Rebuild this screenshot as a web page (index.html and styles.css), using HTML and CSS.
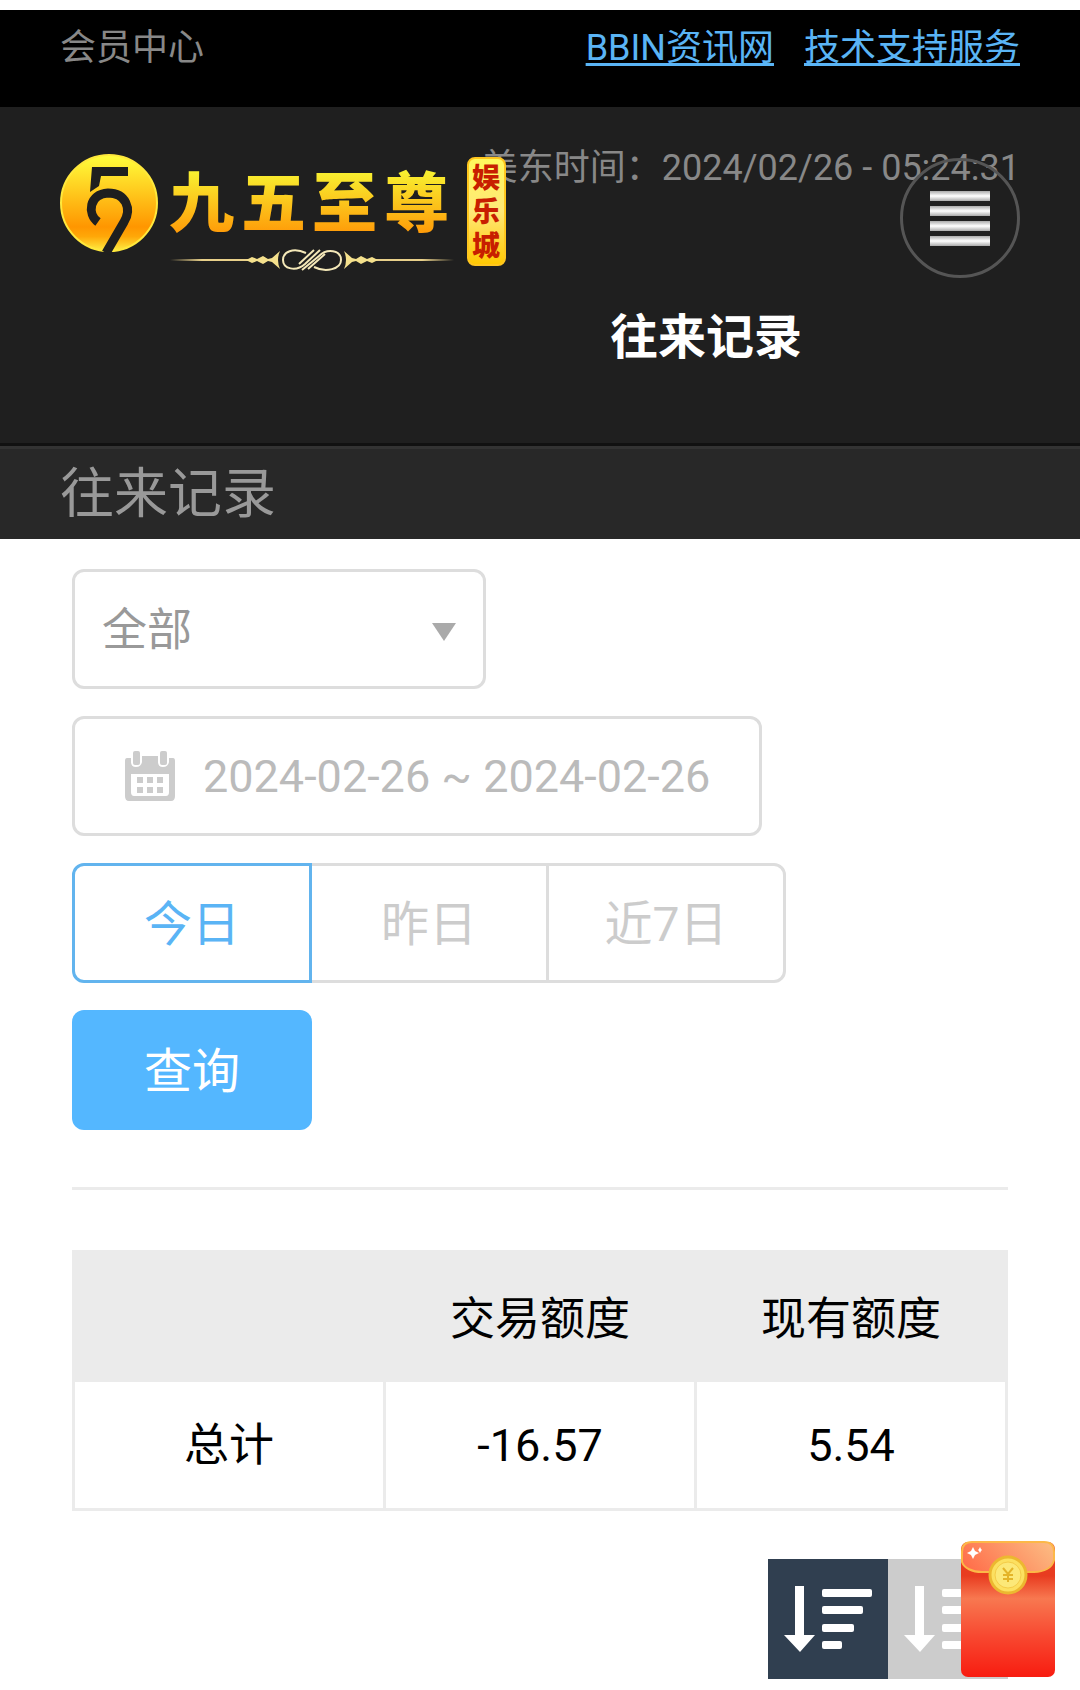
FILE: index.html
```html
<!DOCTYPE html>
<html lang="zh-CN">
<head>
    <meta charset="UTF-8">
    <meta name="viewport" content="width=device-width, initial-scale=1.0">
    <title>往来记录</title>
    <link rel="stylesheet" href="styles.css">
</head>
<body>
    <div class="top-bar">
        <span>会员中心</span>
        <nav class="top-links">
            <a href="#">BBIN资讯网</a>
            <a href="#">技术支持服务</a>
        </nav>
    </div>

    <header class="header">
        <div class="clock">美东时间：2024/02/26 - 05:24:31</div>
        <a href="#" class="logo" aria-label="九五至尊娱乐城">
            <svg width="448" height="120" viewBox="0 0 448 120">
                <defs>
                    <linearGradient id="gold" x1="0" y1="0" x2="0" y2="1">
                        <stop offset="0" stop-color="#ffff3c"/>
                        <stop offset="0.75" stop-color="#ff9600"/>
                        <stop offset="0.85" stop-color="#ffa808"/>
                        <stop offset="1" stop-color="#ffee44"/>
                    </linearGradient>
                    <linearGradient id="goldText" gradientUnits="userSpaceOnUse" x1="0" y1="20" x2="0" y2="82">
                        <stop offset="0" stop-color="#f8f030"/>
                        <stop offset="1" stop-color="#ff9a08"/>
                    </linearGradient>
                    <linearGradient id="seal" x1="0" y1="0" x2="0" y2="1">
                        <stop offset="0" stop-color="#fff95c"/>
                        <stop offset="0.5" stop-color="#ffe878"/>
                        <stop offset="1" stop-color="#ffc800"/>
                    </linearGradient>
                    <linearGradient id="lineLeft" x1="0" x2="1">
                        <stop offset="0" stop-color="#e8d08a" stop-opacity="0"/>
                        <stop offset="0.4" stop-color="#e8d08a"/>
                    </linearGradient>
                    <linearGradient id="lineRight" x1="1" x2="0">
                        <stop offset="0" stop-color="#e8d08a" stop-opacity="0"/>
                        <stop offset="0.4" stop-color="#e8d08a"/>
                    </linearGradient>
                </defs>
                <circle cx="49" cy="51" r="48" fill="url(#gold)" stroke="#ffe83c" stroke-width="2"/>
                <path d="M32 15H68V24H41L39 34L30 40Z" fill="#1f1f1f"/>
                <path d="M38 70C27 62 29 42 48 41C66 41 72 57 64 70L46 101" fill="none" stroke="#1f1f1f" stroke-width="9"/>
                <text class="logo-text" x="109 181 252 324" y="74" fill="url(#goldText)">九五至尊</text>
                <rect x="110" y="107" width="80" height="2" fill="url(#lineLeft)"/>
                <rect x="314" y="107" width="80" height="2" fill="url(#lineRight)"/>
                <g fill="#f4e08c">
                    <path d="M186 108l6-3 5 2 6-3 5 3 4-1 8-7q-4 9 0 18l-8-7-4-1-5 3-6-3-5 2z"/>
                    <path d="M318 108l-6-3-5 2-6-3-5 3-4-1-8-7q4 9 0 18l8-7 4-1 5 3 6-3 5 2z"/>
                </g>
                <g fill="none" stroke="#f4e8b8" stroke-width="2">
                    <path d="M246 101C233 95 223 100 223 108C223 117 236 120 245 112L260 98"/>
                    <path d="M254 115C266 121 281 117 281 108C281 98 267 96 259 104L242 118"/>
                    <path d="M239 112L254 98M248 117L265 102"/>
                </g>
                <rect x="408" y="6" width="37" height="107" rx="7" fill="url(#seal)" stroke="#ffc61e" stroke-width="2"/>
                <g class="seal-text">
                    <text x="426" y="36">娱</text>
                    <text x="426" y="70">乐</text>
                    <text x="426" y="104">城</text>
                </g>
            </svg>
        </a>
        <button type="button" class="menu-button" aria-label="菜单">
            <span></span>
            <span></span>
            <span></span>
            <span></span>
        </button>
        <h1 class="page-name">往来记录</h1>
    </header>

    <h2 class="title-bar">往来记录</h2>

    <main class="content">
        <form class="filters">
            <div class="select-wrap">
                <select class="box" aria-label="类型">
                    <option>全部</option>
                </select>
            </div>

            <label class="box date-box">
                <svg width="52" height="52" viewBox="0 0 52 52" aria-hidden="true">
                    <path fill="#ccc" fill-rule="evenodd" d="M3 8H7V12Q7 17 12 17T18 12V6H34V12Q34 17 39 17T45 12V8H49Q51 8 51 11V46Q51 51 47 51H5Q1 51 1 46V11Q1 8 3 8ZM7 24V42Q7 46 10 46H42Q45 46 45 42V24Z"/>
                    <g fill="#ccc">
                        <rect x="9" y="1" width="7" height="14" rx="2"/>
                        <rect x="36" y="1" width="7" height="14" rx="2"/>
                        <path d="M13 27h6v6h-6zM23 27h6v6h-6zM33 27h6v6h-6zM13 37h6v6h-6zM23 37h6v6h-6zM33 37h6v6h-6z"/>
                    </g>
                </svg>
                <input type="text" value="2024-02-26 ~ 2024-02-26" aria-label="日期" readonly>
            </label>

            <div class="days">
                <button type="button" class="active">今日</button>
                <button type="button">昨日</button>
                <button type="button">近7日</button>
            </div>

            <button type="submit" class="search-button">查询</button>
        </form>

        <table class="records">
            <thead>
                <tr>
                    <th></th>
                    <th>交易额度</th>
                    <th>现有额度</th>
                </tr>
            </thead>
            <tbody>
                <tr>
                    <td>总计</td>
                    <td>-16.57</td>
                    <td>5.54</td>
                </tr>
            </tbody>
        </table>

        <div class="sort">
            <button type="button" class="sort-button active" aria-label="降序">
                <svg width="120" height="120" viewBox="0 0 120 120">
                    <path d="M27 27h9v49h11L32 93 16 76h11z"/>
                    <rect x="54" y="30" width="50" height="8" rx="2"/>
                    <rect x="54" y="47" width="41" height="8" rx="2"/>
                    <rect x="54" y="65" width="32" height="8" rx="2"/>
                    <rect x="54" y="82" width="20" height="8" rx="2"/>
                </svg>
            </button>
            <button type="button" class="sort-button" aria-label="升序">
                <svg width="120" height="120" viewBox="0 0 120 120">
                    <path d="M27 27h9v49h11L32 93 16 76h11z"/>
                    <rect x="54" y="30" width="20" height="8" rx="2"/>
                    <rect x="54" y="47" width="32" height="8" rx="2"/>
                    <rect x="54" y="65" width="41" height="8" rx="2"/>
                    <rect x="54" y="82" width="50" height="8" rx="2"/>
                </svg>
            </button>
        </div>
    </main>

    <a href="#" class="red-packet" aria-label="红包">
        <svg width="96" height="138" viewBox="0 0 96 138">
            <defs>
                <linearGradient id="packet" x1="0" y1="0" x2="0" y2="1">
                    <stop offset="0.25" stop-color="#e83c20"/>
                    <stop offset="0.42" stop-color="#f87850"/>
                    <stop offset="0.7" stop-color="#f84830"/>
                    <stop offset="1" stop-color="#f81c10"/>
                </linearGradient>
                <linearGradient id="flap" x1="0" y1="0.6" x2="1" y2="0.3">
                    <stop offset="0" stop-color="#ff704c"/>
                    <stop offset="1" stop-color="#fcb880"/>
                </linearGradient>
            </defs>
            <rect x="1" y="2" width="94" height="135" rx="7" fill="url(#packet)"/>
            <path d="M2 22V12Q2 2 12 2H84Q94 2 94 12V20C92 28 84 32 74 32H22C12 32 4 28 2 22Z" fill="url(#flap)" stroke="#fcb848" stroke-width="2"/>
            <path d="M13 7l2 4 4 2-4 2-2 4-2-4-4-2 4-2zM20 7l1 2 1 1-1 1-1 2-1-2-1-1 1-1z" fill="#fff"/>
            <circle cx="48" cy="35" r="18" fill="#fce060" stroke="#ecb830" stroke-width="3"/>
            <circle cx="48" cy="35" r="13" fill="#fce878" stroke="#f4cc48" stroke-width="1"/>
            <path d="M43 28l5 6 5-6M48 34v8M43 35h10M43 39h10" fill="none" stroke="#e4b428" stroke-width="2"/>
        </svg>
    </a>
</body>
</html>
```
FILE: styles.css
```css
* {
    box-sizing: border-box;
}

body {
    margin: 0;
    padding-top: 10px;
    font-family: Roboto, "Noto Sans CJK SC", sans-serif;
    background-color: #fff;
    color: #000;
}

button, select, input {
    font-family: inherit;
}

button {
    padding: 0;
    border: none;
    cursor: pointer;
}

svg {
    display: block;
}

/* top bar */
.top-bar {
    display: flex;
    justify-content: space-between;
    height: 97px;
    padding: 11px 60px;
    background-color: #000;
    color: #888;
    font-size: 36px;
    line-height: 54px;
}

.top-links {
    display: flex;
    gap: 30px;
}

.top-links a {
    color: #5ab4f5;
    text-decoration-thickness: 3px;
    text-underline-offset: 3px;
}

/* header */
.header {
    position: relative;
    display: flex;
    flex-wrap: wrap;
    justify-content: space-between;
    align-content: flex-start;
    align-items: flex-start;
    height: 336px;
    padding: 45px 60px 0;
    background-color: #1f1f1f;
}

.clock {
    position: absolute;
    top: 34px;
    right: 60px;
    color: #888;
    font-size: 36px;
    line-height: 54px;
}

.logo,
.menu-button {
    position: relative;
}

.logo-text {
    font-family: "Noto Sans CJK SC", sans-serif;
    font-size: 65px;
    font-weight: 900;
}

.seal-text {
    fill: #c81e00;
    font-family: "Noto Sans CJK SC", sans-serif;
    font-size: 28px;
    font-weight: 900;
    text-anchor: middle;
}

.menu-button {
    display: flex;
    flex-direction: column;
    align-items: center;
    justify-content: center;
    gap: 5px;
    width: 120px;
    height: 120px;
    margin-top: 6px;
    border: 3px solid #555;
    border-radius: 50%;
    background-color: transparent;
}

.menu-button span {
    width: 60px;
    height: 10px;
    background: linear-gradient(#aaa, #fff, #aaa);
}

.page-name {
    width: 100%;
    margin: 24px 0 0;
    padding-left: 550px;
    color: #fff;
    font-size: 48px;
    line-height: 72px;
}

.title-bar {
    margin: 0;
    padding: 8px 60px 4px;
    border-top: 3px solid #111;
    box-shadow: inset 0 3px #333;
    background-color: #282828;
    color: #999;
    font-size: 54px;
    font-weight: normal;
    line-height: 81px;
}

/* filters */
.content {
    padding: 30px 72px 11px;
}

.filters {
    display: flex;
    flex-direction: column;
    align-items: flex-start;
    gap: 27px;
    padding-bottom: 57px;
    border-bottom: 3px solid #ebebeb;
}

.box {
    height: 120px;
    border: 3px solid #ddd;
    border-radius: 12px;
    background-color: #fff;
    font-size: 45px;
}

.select-wrap {
    position: relative;
}

.select-wrap::after {
    content: "";
    position: absolute;
    top: 54px;
    right: 30px;
    border: 12px solid transparent;
    border-top: 18px solid #aaa;
    border-bottom: none;
    pointer-events: none;
}

select.box {
    display: block;
    width: 414px;
    padding: 3px 27px 0;
    appearance: none;
    color: #999;
}

.date-box {
    display: flex;
    align-items: center;
    gap: 27px;
    width: 690px;
    padding-left: 49px;
}

.date-box input {
    flex: 1;
    min-width: 0;
    padding: 0;
    border: none;
    outline: none;
    background: none;
    color: #bbb;
    font-size: 45px;
}

.days {
    display: flex;
}

.days button {
    width: 240px;
    height: 120px;
    padding-bottom: 6px;
    border: 3px solid #ddd;
    background-color: #fff;
    color: #ccc;
    font-size: 48px;
}

.days button + button {
    margin-left: -3px;
}

.days button:first-child {
    border-radius: 12px 0 0 12px;
}

.days button:last-child {
    border-radius: 0 12px 12px 0;
}

.days .active {
    position: relative;
    border-color: #62b4ee;
    color: #5ab4f5;
}

.search-button {
    width: 240px;
    height: 120px;
    padding-bottom: 6px;
    border-radius: 12px;
    background-color: #54b7ff;
    color: #fff;
    font-size: 48px;
}

/* records */
.records {
    width: 100%;
    margin-top: 60px;
    border-collapse: collapse;
    table-layout: fixed;
    font-size: 45px;
    line-height: 66px;
    text-align: center;
}

.records th,
.records td {
    border: 3px solid #ebebeb;
}

.records th {
    padding: 34px 0 26px;
    background-color: #ebebeb;
    font-weight: normal;
}

.records td {
    padding: 31px 0 29px;
}

/* sort */
.sort {
    display: flex;
    justify-content: flex-end;
    margin-top: 48px;
}

.sort-button {
    width: 120px;
    height: 120px;
    background-color: #ccc;
    fill: #fff;
}

.sort-button.active {
    background-color: #303f50;
}

/* floats over the page */
.red-packet {
    position: fixed;
    right: 24px;
    bottom: 12px;
}
```
